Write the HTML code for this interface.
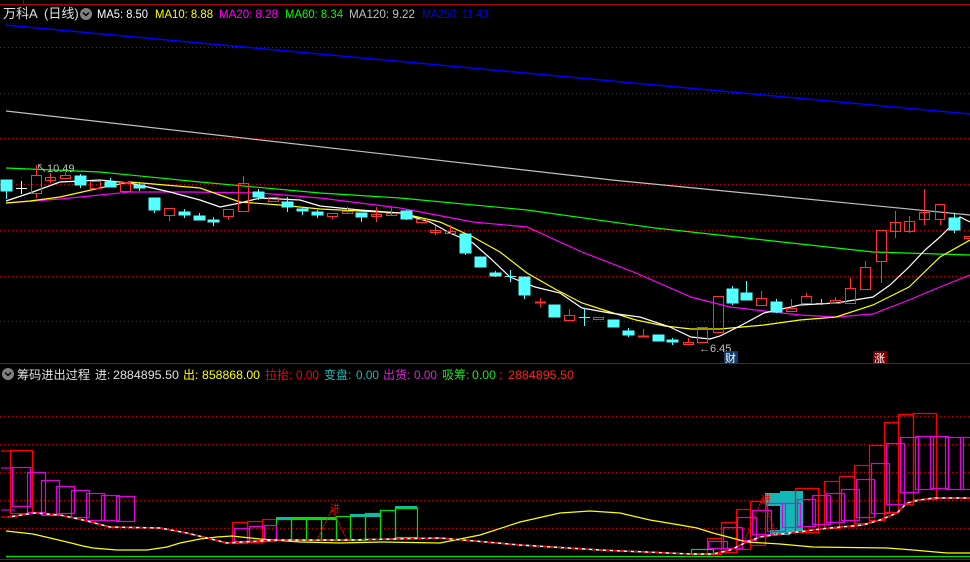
<!DOCTYPE html>
<html><head><meta charset="utf-8"><style>
html,body{margin:0;padding:0;background:#000;width:970px;height:562px;overflow:hidden}
svg{display:block}
text{font-family:"Liberation Sans","Noto Sans CJK SC",sans-serif}
</style></head><body>
<svg width="970" height="562" viewBox="0 0 970 562" xmlns="http://www.w3.org/2000/svg">
<rect width="970" height="562" fill="#000"/>
<!-- top border -->
<line x1="0" y1="4.5" x2="970" y2="4.5" stroke="#b00000"/>
<line x1="23.5" y1="0" x2="23.5" y2="4" stroke="#b00000"/>
<!-- grid dotted -->
<g stroke="#c00000" stroke-dasharray="1,3" stroke-width="1">
<line x1="0" y1="47.5" x2="970" y2="47.5"/>
<line x1="0" y1="93.5" x2="970" y2="93.5"/>
<line x1="0" y1="138.5" x2="970" y2="138.5"/>
<line x1="0" y1="184.5" x2="970" y2="184.5"/>
<line x1="0" y1="230.5" x2="970" y2="230.5"/>
<line x1="0" y1="276.5" x2="970" y2="276.5"/>
<line x1="0" y1="321.5" x2="970" y2="321.5"/>
<line x1="0" y1="416.5" x2="970" y2="416.5"/>
<line x1="0" y1="444.5" x2="970" y2="444.5"/>
<line x1="0" y1="472.5" x2="970" y2="472.5"/>
<line x1="0" y1="500.5" x2="970" y2="500.5"/>
<line x1="0" y1="528.5" x2="970" y2="528.5"/>
</g>
<!-- header -->
<text x="3" y="18" font-size="13" fill="#e0e0e0">万科A</text>
<text x="44" y="18" font-size="13" fill="#e0e0e0">(日线)</text>
<circle cx="86" cy="14" r="6" fill="#808080"/>
<path d="M83 12.5l3 3 3-3" stroke="#000" stroke-width="1.5" fill="none"/>
<text x="97" y="18" font-size="12" fill="#ffffff" textLength="51" lengthAdjust="spacingAndGlyphs">MA5: 8.50</text>
<text x="155" y="18" font-size="12" fill="#ffff00" textLength="58" lengthAdjust="spacingAndGlyphs">MA10: 8.88</text>
<text x="219" y="18" font-size="12" fill="#ff00ff" textLength="59" lengthAdjust="spacingAndGlyphs">MA20: 8.28</text>
<text x="285" y="18" font-size="12" fill="#00ff00" textLength="58" lengthAdjust="spacingAndGlyphs">MA60: 8.34</text>
<text x="349" y="18" font-size="12" fill="#c0c0c0" textLength="66" lengthAdjust="spacingAndGlyphs">MA120: 9.22</text>
<text x="422" y="18" font-size="12" fill="#0000ff" textLength="66" lengthAdjust="spacingAndGlyphs">MA250: 11.43</text>

<!-- MA250 blue, MA120 gray -->
<polyline points="5,25 970,114" stroke="#0000ff" stroke-width="1.5" fill="none"/>
<polyline points="6,111 612,180 970,215" stroke="#c0c0c0" stroke-width="1.2" fill="none"/>
<!-- MA60 green -->
<polyline points="6,168 100,172 200,182 320,193 400,198 527,210 655,228 764,240 873,252 970,255" stroke="#00ff00" stroke-width="1.2" fill="none"/>
<!-- MA20 magenta -->
<polyline points="6,203 60,199 100,195 130,192 190,192 260,193 320,198 400,208 473,222 527,227 582,252 636,273 691,297 730,307 764,311 800,315 836,317 873,314 909,300 940,287 970,275" stroke="#ff00ff" stroke-width="1.2" fill="none"/>
<!-- MA10 yellow -->
<polyline points="6,203 30,201 60,197 100,188 130,182 200,188 240,202 280,205 320,209 400,213 440,222 473,237 500,252 527,273 555,289 582,303 610,312 636,320 665,326 691,329 720,329 764,325 800,320 836,317 873,305 909,287 940,257 970,240" stroke="#ffff00" stroke-width="1.2" fill="none"/>
<!-- MA5 white -->
<polyline points="6,201 30,193 60,182 100,180 130,183 170,192 200,200 220,207 240,203 260,198 300,200 320,206 360,210 400,213 430,222 450,233 473,243 490,258 510,277 535,287 560,293 582,308 610,313 640,317 670,327 691,337 710,339 720,336 740,326 764,313 800,305 836,303 873,297 890,285 909,267 925,250 940,237 960,217 970,222" stroke="#ffffff" stroke-width="1.2" fill="none"/>

<!-- candles -->
<g stroke-width="1">
<!-- bear cyan: fill -->
<g fill="#54ffff" stroke="#54ffff">
<line x1="6.5" y1="180" x2="6.5" y2="199"/><rect x="1" y="180" width="11" height="11"/>
<line x1="80.5" y1="174" x2="80.5" y2="188"/><rect x="75" y="176" width="11" height="9"/>
<line x1="110.5" y1="178" x2="110.5" y2="187"/><rect x="105" y="182" width="11" height="5"/>
<line x1="139.5" y1="183" x2="139.5" y2="191"/><rect x="134" y="185" width="11" height="3"/>
<line x1="154.5" y1="198" x2="154.5" y2="213"/><rect x="149" y="198" width="11" height="12"/>
<line x1="184.5" y1="209" x2="184.5" y2="218"/><rect x="179" y="212" width="11" height="3"/>
<line x1="199.5" y1="213" x2="199.5" y2="220"/><rect x="194" y="216" width="11" height="4"/>
<line x1="213.5" y1="217" x2="213.5" y2="226"/><rect x="208" y="220" width="11" height="2"/>
<line x1="258.5" y1="189" x2="258.5" y2="200"/><rect x="253" y="192" width="11" height="5"/>
<line x1="287.5" y1="197" x2="287.5" y2="212"/><rect x="282" y="202" width="11" height="5"/>
<line x1="302.5" y1="208" x2="302.5" y2="215"/><rect x="297" y="209" width="11" height="2"/>
<line x1="317.5" y1="210" x2="317.5" y2="218"/><rect x="312" y="212" width="11" height="3"/>
<line x1="361.5" y1="213" x2="361.5" y2="222"/><rect x="356" y="213" width="11" height="4"/>
<line x1="406.5" y1="210" x2="406.5" y2="220"/><rect x="401" y="211" width="11" height="8"/>
<line x1="465.5" y1="234" x2="465.5" y2="255"/><rect x="460" y="234" width="11" height="19"/>
<rect x="475" y="257" width="11" height="10"/>
<line x1="495.5" y1="271" x2="495.5" y2="277"/><rect x="490" y="273" width="11" height="3"/>
<line x1="510.5" y1="270" x2="510.5" y2="282"/><line x1="505" y1="276.5" x2="516" y2="276.5"/>
<line x1="524.5" y1="277" x2="524.5" y2="299"/><rect x="519" y="277" width="11" height="18"/>
<rect x="549" y="305" width="11" height="12"/>
<line x1="584.5" y1="308" x2="584.5" y2="326"/><line x1="579" y1="317.5" x2="590" y2="317.5"/>
<rect x="608" y="320" width="11" height="7"/>
<line x1="628.5" y1="328" x2="628.5" y2="337"/><rect x="623" y="331" width="11" height="4"/>
<rect x="653" y="335" width="11" height="6"/>
<line x1="672.5" y1="338" x2="672.5" y2="345"/><rect x="667" y="340" width="11" height="2"/>
<line x1="732.5" y1="286" x2="732.5" y2="305"/><rect x="727" y="289" width="11" height="14"/>
<line x1="746.5" y1="281" x2="746.5" y2="300"/><rect x="741" y="293" width="11" height="7"/>
<line x1="776.5" y1="299" x2="776.5" y2="313"/><rect x="771" y="302" width="11" height="10"/>
<line x1="821.5" y1="299" x2="821.5" y2="305"/><line x1="816" y1="303.5" x2="827" y2="303.5"/>
<line x1="954.5" y1="213" x2="954.5" y2="233"/><rect x="949" y="218" width="11" height="12"/>
</g>
<!-- white doji -->
<g stroke="#ffffff"><line x1="21.5" y1="181" x2="21.5" y2="194"/><line x1="16" y1="188.5" x2="27" y2="188.5"/></g>
<!-- bull red hollow -->
<g fill="none" stroke="#ff3232">
<line x1="36.5" y1="165" x2="36.5" y2="175"/><line x1="36.5" y1="194" x2="36.5" y2="198"/><rect x="31.5" y="175.5" width="10" height="18"/>
<line x1="50.5" y1="173" x2="50.5" y2="183"/><rect x="45.5" y="177.5" width="10" height="3"/>
<line x1="65.5" y1="172" x2="65.5" y2="175"/><rect x="60.5" y="175.5" width="10" height="3"/>
<rect x="90.5" y="181.5" width="10" height="7"/>
<rect x="120.5" y="182.5" width="10" height="9"/>
<line x1="169.5" y1="216" x2="169.5" y2="221"/><rect x="164.5" y="208.5" width="10" height="7"/>
<line x1="228.5" y1="217" x2="228.5" y2="220"/><rect x="223.5" y="209.5" width="10" height="7"/>
<line x1="243.5" y1="176" x2="243.5" y2="183"/><rect x="238.5" y="183.5" width="10" height="28"/>
<rect x="268.5" y="197.5" width="10" height="4"/>
<line x1="332.5" y1="217" x2="332.5" y2="219"/><rect x="327.5" y="213.5" width="10" height="3"/>
<line x1="347.5" y1="207" x2="347.5" y2="214"/><rect x="342.5" y="211.5" width="10" height="2"/>
<line x1="376.5" y1="207" x2="376.5" y2="222"/><rect x="371.5" y="214.5" width="10" height="2"/>
<line x1="391.5" y1="207" x2="391.5" y2="216"/><rect x="386.5" y="213.5" width="10" height="2"/>
<rect x="416.5" y="219.5" width="10" height="3"/>
<line x1="435.5" y1="226" x2="435.5" y2="235"/><rect x="430.5" y="230.5" width="10" height="2"/>
<line x1="450.5" y1="225" x2="450.5" y2="233"/><rect x="445.5" y="231.5" width="10" height="2"/>
<line x1="540.5" y1="298" x2="540.5" y2="307"/><line x1="535" y1="302.5" x2="546" y2="302.5" stroke-width="2"/>
<line x1="569.5" y1="309" x2="569.5" y2="315"/><rect x="564.5" y="315.5" width="10" height="5"/>
<rect x="593.5" y="317.5" width="10" height="2"/>
<line x1="643.5" y1="329" x2="643.5" y2="336"/><line x1="638" y1="336.5" x2="649" y2="336.5" stroke-width="2"/>
<line x1="688.5" y1="338" x2="688.5" y2="342"/><rect x="683.5" y="342.5" width="10" height="2"/>
<rect x="697.5" y="327.5" width="10" height="15"/>
<rect x="713.5" y="296.5" width="10" height="36"/>
<line x1="761.5" y1="291" x2="761.5" y2="298"/><rect x="756.5" y="298.5" width="10" height="7"/>
<line x1="791.5" y1="299" x2="791.5" y2="308"/><rect x="786.5" y="308.5" width="10" height="3"/>
<line x1="806.5" y1="293" x2="806.5" y2="296"/><rect x="801.5" y="296.5" width="10" height="7"/>
<line x1="835.5" y1="297" x2="835.5" y2="300"/><rect x="830.5" y="300.5" width="10" height="3"/>
<line x1="850.5" y1="278" x2="850.5" y2="288"/><rect x="845.5" y="288.5" width="10" height="15"/>
<line x1="865.5" y1="261" x2="865.5" y2="267"/><rect x="860.5" y="267.5" width="10" height="22"/>
<line x1="881.5" y1="261" x2="881.5" y2="283"/><rect x="876.5" y="230.5" width="10" height="31"/>
<line x1="895.5" y1="211" x2="895.5" y2="238"/><rect x="890.5" y="222.5" width="10" height="9"/>
<line x1="909.5" y1="216" x2="909.5" y2="233"/><rect x="904.5" y="221.5" width="10" height="10"/>
<line x1="924.5" y1="189" x2="924.5" y2="225"/><rect x="919.5" y="212.5" width="10" height="7"/>
<line x1="940.5" y1="219" x2="940.5" y2="225"/><rect x="935.5" y="204.5" width="9" height="15"/>
<rect x="964.5" y="236.5" width="8" height="2"/>
</g>
</g>
<!-- labels -->
<text x="36" y="172" font-size="11" fill="#c0c0c0">↖10.49</text>
<text x="699" y="352" font-size="11" fill="#c0c0c0">←6.45</text>
<rect x="724" y="351" width="14" height="12" fill="#103a6a"/>
<text x="725" y="362" font-size="11" fill="#ffffff">财</text>
<rect x="873" y="351" width="14" height="12" fill="#7a0000"/>
<text x="874" y="362" font-size="11" fill="#ffffff">涨</text>

<!-- lower pane separator -->
<line x1="0" y1="363.5" x2="970" y2="363.5" stroke="#b00000"/>
<circle cx="8" cy="374" r="6" fill="#808080"/>
<path d="M5 372.5l3 3 3-3" stroke="#000" stroke-width="1.5" fill="none"/>
<g font-size="12">
<text x="17" y="379" fill="#e0e0e0" textLength="73" lengthAdjust="spacingAndGlyphs">筹码进出过程</text>
<text x="95" y="379" fill="#e0e0e0">进:</text>
<text x="113" y="379" fill="#e0e0e0" textLength="66" lengthAdjust="spacingAndGlyphs">2884895.50</text>
<text x="183" y="379" fill="#ffff00">出:</text>
<text x="202" y="379" fill="#ffff00" textLength="58" lengthAdjust="spacingAndGlyphs">858868.00</text>
<text x="265" y="379" fill="#ff0000">拉抬:</text>
<text x="296" y="379" fill="#ff0000" textLength="23" lengthAdjust="spacingAndGlyphs">0.00</text>
<text x="324" y="379" fill="#1ab8b8">变盘:</text>
<text x="356" y="379" fill="#1ab8b8" textLength="23" lengthAdjust="spacingAndGlyphs">0.00</text>
<text x="383" y="379" fill="#e020e0">出货:</text>
<text x="414" y="379" fill="#e020e0" textLength="23" lengthAdjust="spacingAndGlyphs">0.00</text>
<text x="442" y="379" fill="#20e020">吸筹:</text>
<text x="472" y="379" fill="#20e020" textLength="24" lengthAdjust="spacingAndGlyphs">0.00</text>
<text x="499" y="379" fill="#ff2020">:</text>
<text x="508" y="379" fill="#ff2020" textLength="66" lengthAdjust="spacingAndGlyphs">2884895.50</text>
</g>

<!-- lower pane: cyan fills -->
<g fill="#10b8b8">
<rect x="276" y="517" width="60" height="3"/>
<rect x="350" y="514" width="30" height="3"/>
<rect x="395" y="506" width="22" height="3"/>
<rect x="765" y="493" width="15" height="13"/>
<rect x="780" y="491" width="23" height="41"/>
<rect x="770" y="530" width="20" height="5"/>
</g>
<!-- red boxes -->
<g fill="none" stroke="#ff0000" stroke-width="1.2">
<line x1="1" y1="451" x2="10" y2="451"/><line x1="1" y1="517" x2="17" y2="517"/>
<rect x="10.5" y="450.5" width="22" height="63"/>
<rect x="232.5" y="522.5" width="15" height="21"/>
<rect x="247.5" y="521.5" width="15" height="21"/>
<rect x="262.5" y="519.5" width="14" height="22"/>
<rect x="707.5" y="538.5" width="14" height="16"/>
<rect x="721.5" y="522.5" width="15" height="30"/>
<rect x="736.5" y="509.5" width="14" height="40"/>
<rect x="750.5" y="501.5" width="15" height="44"/>
<rect x="795.5" y="488.5" width="23" height="44"/>
<rect x="824.5" y="481.5" width="15" height="47"/>
<rect x="839.5" y="476.5" width="15" height="50"/>
<rect x="854.5" y="465.5" width="15" height="58"/>
<rect x="869.5" y="445.5" width="15" height="75"/>
<rect x="884.5" y="422.5" width="14" height="90"/>
<rect x="898.5" y="414.5" width="15" height="90"/>
<rect x="913.5" y="413.5" width="23" height="86"/>
</g>
<!-- green boxes -->
<g fill="none" stroke="#00e000" stroke-width="1.2">
<rect x="276.5" y="519.5" width="15" height="21"/>
<rect x="291.5" y="518.5" width="15" height="22"/>
<rect x="306.5" y="518.5" width="15" height="22"/>
<rect x="321.5" y="518.5" width="15" height="22"/>
<rect x="336.5" y="516.5" width="14" height="24"/>
<rect x="350.5" y="515.5" width="15" height="25"/>
<rect x="365.5" y="513.5" width="15" height="26"/>
<rect x="380.5" y="510.5" width="15" height="29"/>
<rect x="395.5" y="508.5" width="22" height="29"/>
<rect x="691.5" y="549.5" width="22" height="5"/>
</g>
<!-- magenta boxes -->
<g fill="none" stroke="#e000e0" stroke-width="1.2">
<line x1="1" y1="468" x2="12" y2="468"/><line x1="1" y1="510" x2="15" y2="510"/>
<rect x="12.5" y="467.5" width="18" height="39"/>
<rect x="27.5" y="472.5" width="18" height="40"/>
<rect x="41.5" y="480.5" width="18" height="35"/>
<rect x="56.5" y="486.5" width="18" height="27"/>
<rect x="71.5" y="490.5" width="18" height="27"/>
<rect x="86.5" y="493.5" width="18" height="27"/>
<rect x="101.5" y="495.5" width="18" height="25"/>
<rect x="116.5" y="496.5" width="18" height="25"/>
<rect x="234.5" y="528.5" width="15" height="13"/>
<rect x="249.5" y="526.5" width="15" height="15"/>
<rect x="264.5" y="525.5" width="12" height="14"/>
<rect x="708.5" y="541.5" width="19" height="7"/>
<rect x="723.5" y="527.5" width="19" height="21"/>
<rect x="737.5" y="517.5" width="19" height="23"/>
<rect x="752.5" y="510.5" width="19" height="24"/>
<rect x="767.5" y="503.5" width="18" height="28"/>
<rect x="782.5" y="503.5" width="18" height="24"/>
<rect x="797.5" y="499.5" width="18" height="27"/>
<rect x="812.5" y="495.5" width="18" height="29"/>
<rect x="826.5" y="493.5" width="18" height="29"/>
<rect x="841.5" y="489.5" width="18" height="31"/>
<rect x="856.5" y="479.5" width="18" height="38"/>
<rect x="871.5" y="463.5" width="18" height="50"/>
<rect x="886.5" y="443.5" width="18" height="61"/>
<rect x="900.5" y="437.5" width="18" height="55"/>
<rect x="915.5" y="436.5" width="18" height="53"/>
<rect x="930.5" y="436.5" width="18" height="52"/>
<rect x="945.5" y="437.5" width="18" height="52"/>
<rect x="960.5" y="437.5" width="12" height="52"/>
</g>
<!-- yellow line -->
<polyline points="6,531 33,534 50,538 67,542 83,546 93,548 117,550 147,550 167,547 180,543 200,539 217,537 232,536 260,539 300,542 340,543 383,542 440,543 480,535 520,522 560,513 590,511 620,513 650,520 680,525 697,528 713,533 747,542 780,544 813,547 887,548 913,550 947,553 970,553" stroke="#ffff00" stroke-width="1.2" fill="none"/>
<!-- red/white dashed line -->
<polyline points="8,517 35,513 60,515 83,520 110,527 160,528 187,533 207,538 227,543 260,541 277,540 347,540 393,539 440,538 520,545 600,550 690,554 713,554 730,550 747,542 760,537 773,535 790,533 813,530 830,528 863,525 880,520 897,513 907,503 920,500 933,498 970,498" stroke="#ffffff" stroke-width="1.5" fill="none"/>
<polyline points="8,517 35,513 60,515 83,520 110,527 160,528 187,533 207,538 227,543 260,541 277,540 347,540 393,539 440,538 520,545 600,550 690,554 713,554 730,550 747,542 760,537 773,535 790,533 813,530 830,528 863,525 880,520 897,513 907,503 920,500 933,498 970,498" stroke="#ff0000" stroke-width="1.5" stroke-dasharray="4,3" fill="none"/>
<!-- tents -->
<polyline points="317,540 332,509 347,540" stroke="#ff0000" stroke-width="1" stroke-dasharray="2,1" fill="none"/>
<text x="330" y="512" font-size="10" fill="#ff0000">进</text>
<polyline points="744,542 763,497 776,535" stroke="#ff0000" stroke-width="1" stroke-dasharray="2,1" fill="none"/>
<text x="761" y="503" font-size="10" fill="#ff0000">进</text>
<!-- bottom lines -->
<line x1="6" y1="556.5" x2="970" y2="556.5" stroke="#00e000" stroke-width="1.2"/>
<line x1="0" y1="559.5" x2="970" y2="559.5" stroke="#b00000"/>
</svg>
</body></html>
